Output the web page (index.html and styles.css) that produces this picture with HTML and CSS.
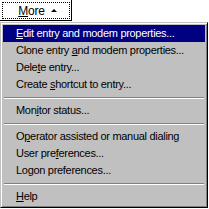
FILE: index.html
```html
<!DOCTYPE html>
<html>
<head>
<meta charset="utf-8">
<link rel="stylesheet" href="styles.css">
</head>
<body>
<div class="btn">
  <div class="focus"><span class="label"><u>M</u>ore</span><span class="tri"></span></div>
</div>
<div class="menu">
  <div class="item active"><u>E</u>dit entry and modem properties...</div>
  <div class="item">Clone entry <u>a</u>nd modem properties...</div>
  <div class="item">Dele<u>t</u>e entry...</div>
  <div class="item">Create <u>s</u>hortcut to entry...</div>
  <div class="sep"></div>
  <div class="item">Mon<u>i</u>tor status...</div>
  <div class="sep"></div>
  <div class="item">O<u>p</u>erator assisted or manual dialing</div>
  <div class="item">User pre<u>f</u>erences...</div>
  <div class="item">Logon preferences...</div>
  <div class="sep"></div>
  <div class="item"><u>H</u>elp</div>
</div>
</body>
</html>
```
FILE: styles.css
```css
html, body {
  margin: 0;
  padding: 0;
  background: #ffffff;
}
body {
  font-family: "Liberation Sans", Arial, sans-serif;
  font-size: 11px;
  color: #000;
}
u {
  text-decoration: underline;
  text-underline-offset: 1px;
}
.btn {
  width: 72px;
  height: 21px;
  box-sizing: border-box;
  background: #ffffff;
  border-right: 1px solid #000;
  border-bottom: 1px solid #000;
  padding: 2px 0 0 2px;
}
.focus {
  width: 68px;
  height: 17px;
  box-sizing: border-box;
  border: 1px dotted #000;
  display: flex;
  align-items: center;
  justify-content: center;
  gap: 6px;
  padding-left: 3px;
}
.label {
  font-size: 12px;
  line-height: 14px;
  letter-spacing: -0.2px;
}
.tri {
  width: 0;
  height: 0;
  border-left: 3px solid transparent;
  border-right: 3px solid transparent;
  border-bottom: 3px solid #000;
}
.menu {
  margin-top: 1px;
  width: 208px;
  height: 186px;
  box-sizing: border-box;
  background: #c0c0c0;
  border-top: 1px solid #c0c0c0;
  border-left: 1px solid #c0c0c0;
  border-right: 1px solid #000;
  border-bottom: 1px solid #000;
  box-shadow: inset 1px 1px 0 #ffffff, inset -1px -1px 0 #808080;
  padding: 2px;
  display: flex;
  flex-direction: column;
}
.item {
  height: 17px;
  line-height: 17px;
  padding-left: 13px;
  white-space: nowrap;
  letter-spacing: -0.3px;
}
.item.active {
  background: #000080;
  color: #ffffff;
}
.sep {
  height: 9px;
  display: flex;
  flex-direction: column;
  justify-content: center;
  padding: 0 1px;
}
.sep::before {
  content: "";
  display: block;
  height: 1px;
  background: #808080;
  border-bottom: 1px solid #ffffff;
}
```
